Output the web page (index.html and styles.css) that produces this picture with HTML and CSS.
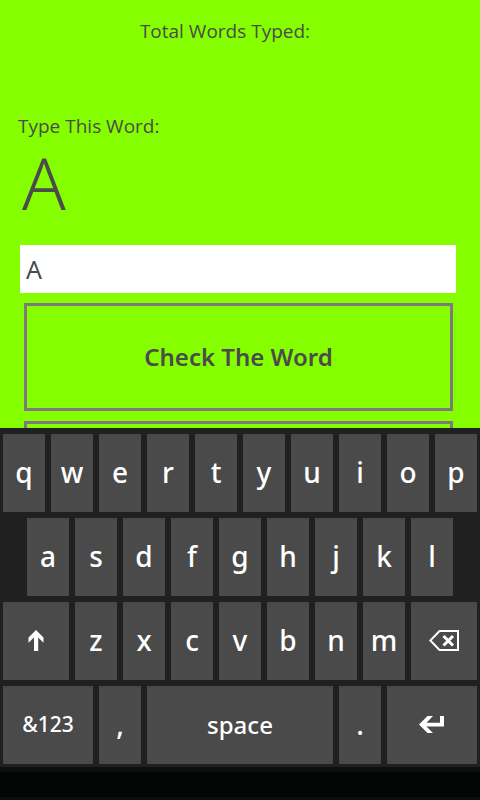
FILE: index.html
```html
<!DOCTYPE html>
<html lang="en">
<head>
<meta charset="utf-8">
<meta name="viewport" content="width=device-width, initial-scale=1">
<title>Typing Practice</title>
<link rel="stylesheet" href="styles.css">
</head>
<body>
<main class="game">
  <p class="total">Total Words Typed:</p>
  <label class="prompt" for="answer">Type This Word:</label>
  <p class="word">A</p>
  <input class="answer" id="answer" type="text" value="A" autocomplete="off">
  <button class="action" type="button">Check The Word</button>
  <button class="action" type="button" aria-label="Next"></button>
</main>
<section class="keyboard" aria-label="Keyboard">
  <button class="key" type="button">q</button>
  <button class="key" type="button">w</button>
  <button class="key" type="button">e</button>
  <button class="key" type="button">r</button>
  <button class="key" type="button">t</button>
  <button class="key" type="button">y</button>
  <button class="key" type="button">u</button>
  <button class="key" type="button">i</button>
  <button class="key" type="button">o</button>
  <button class="key" type="button">p</button>

  <button class="key indent" type="button">a</button>
  <button class="key" type="button">s</button>
  <button class="key" type="button">d</button>
  <button class="key" type="button">f</button>
  <button class="key" type="button">g</button>
  <button class="key" type="button">h</button>
  <button class="key" type="button">j</button>
  <button class="key" type="button">k</button>
  <button class="key" type="button">l</button>

  <button class="key medium icon" type="button" aria-label="Shift">
    <svg width="16" height="22" viewBox="0 0 16 22" aria-hidden="true"><path fill="#fff" d="M8 0 L15.500 7.500 V12.800 L10.200 7.500 V21 H6 V7.500 L0.500 12.800 V7.500 Z"/></svg>
  </button>
  <button class="key" type="button">z</button>
  <button class="key" type="button">x</button>
  <button class="key" type="button">c</button>
  <button class="key" type="button">v</button>
  <button class="key" type="button">b</button>
  <button class="key" type="button">n</button>
  <button class="key" type="button">m</button>
  <button class="key medium icon" type="button" aria-label="Backspace">
    <svg width="30" height="22" viewBox="0 0 30 22" fill="none" stroke="#fff" aria-hidden="true"><path stroke-width="2" d="M10.500 1 H29 V20 H10.500 L1.300 10.500 Z"/><path stroke-width="3" d="M14.500 6 L24 15.500 M24 6 L14.500 15.500"/></svg>
  </button>

  <button class="key wide small" type="button">&amp;123</button>
  <button class="key" type="button">,</button>
  <button class="key space" type="button">space</button>
  <button class="key" type="button">.</button>
  <button class="key wide icon" type="button" aria-label="Enter">
    <svg width="26" height="18" viewBox="0 0 26 18" aria-hidden="true"><path fill="#fff" d="M0 8.500 L8.500 0 H14 L7.500 6.700 H21 V0 H25 V10.500 H7.500 L14 17 H8.500 Z"/></svg>
  </button>
</section>
<footer class="tray"></footer>
</body>
</html>
```
FILE: styles.css
```css
* {
  box-sizing: border-box;
}

body {
  display: flex;
  flex-direction: column;
  height: 100vh;
  margin: 0;
  overflow: hidden;
  background: #85ff00;
  color: #4b4b4b;
  font-family: "Noto Sans", "Open Sans", sans-serif;
}

button,
input {
  margin: 0;
  border-radius: 0;
  font-family: inherit;
}

.game {
  display: flex;
  flex: 1;
  flex-direction: column;
  min-height: 0;
  padding: 18px 24px 0 20px;
  overflow: hidden;
}

.total,
.prompt {
  font-family: "Open Sans", sans-serif;
  font-size: 19px;
  line-height: 27px;
}

.total {
  margin: 0 0 68px;
  padding-right: 26px;
  text-align: center;
}

.prompt {
  margin-left: -2px;
}

.word {
  margin: 0 0 21px 2px;
  font-size: 72px;
  font-weight: 350;
  line-height: 84px;
}

.answer {
  flex: none;
  width: 100%;
  height: 48px;
  margin-bottom: 10px;
  padding: 0 6px;
  border: 0;
  background: #fff;
  color: #4b4b4b;
  font-size: 25px;
  outline: 0;
}

.action {
  flex: none;
  height: 108px;
  margin: 0 3px 10px 4px;
  padding: 0 0 2px;
  border: 3px solid #807a80;
  background: transparent;
  color: #4b4b4b;
  font-size: 24px;
  font-weight: 600;
}

.keyboard {
  display: grid;
  flex: none;
  grid-template-columns: repeat(20, minmax(0, 1fr));
  grid-auto-rows: 78px;
  gap: 6px;
  padding: 6px 3px 3px;
  background: #202020;
}

.key {
  display: flex;
  grid-column: span 2;
  align-items: center;
  justify-content: center;
  padding: 0 0 2px;
  border: 0;
  background: #4a4a4a;
  color: #fff;
  font-size: 28px;
  font-weight: 500;
}

.indent {
  grid-column: 2 / span 2;
}

.medium {
  grid-column: span 3;
}

.wide {
  grid-column: span 4;
}

.space {
  grid-column: span 8;
  font-size: 24px;
}

.small {
  font-size: 21px;
}

.icon {
  padding: 0;
}

.tray {
  flex: none;
  height: 33px;
  border-top: 5px solid #0e0f0f;
  border-bottom: 3px solid #0e0e0e;
  background: #040505;
}
```
